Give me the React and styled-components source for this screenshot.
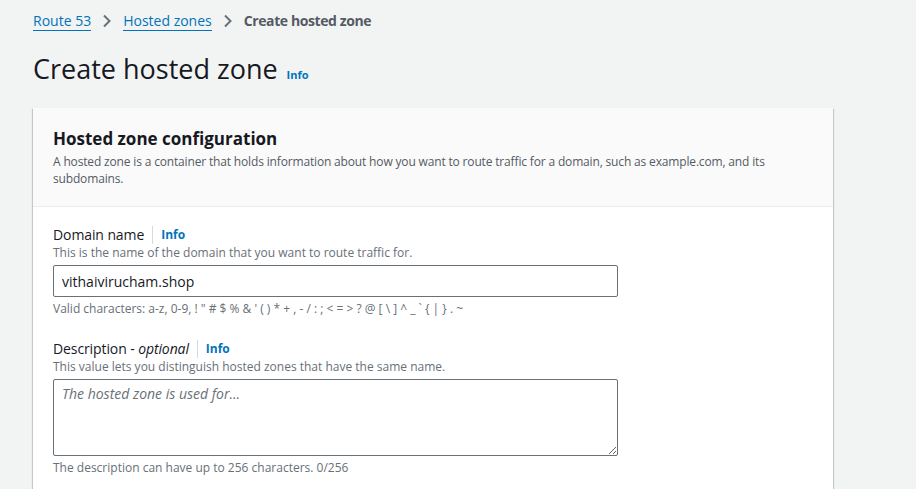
import React from "react";
import styled, { createGlobalStyle } from "styled-components";

const GlobalStyle = createGlobalStyle`
  html, body {
    margin: 0;
    padding: 0;
    background: #f2f3f3;
    font-family: "Open Sans", "Noto Sans", sans-serif;
    color: #16191f;
  }
`;

const Page = styled.div`
  padding: 11px 83px 0 33px;
  width: 800px;
`;

const Breadcrumbs = styled.nav`
  display: flex;
  align-items: center;
  gap: 10px;
  font-size: 14px;
  line-height: 20px;
`;

const Crumb = styled.a`
  color: #0073bb;
  text-decoration: none;
  border-bottom: 1px solid #0073bb;
  line-height: 19px;
  cursor: pointer;
`;

const Current = styled.span`
  color: #545b64;
  font-weight: 700;
  letter-spacing: -0.4px;
`;

const Chevron = styled.svg`
  width: 12px;
  height: 14px;
  flex: none;
`;

const TitleRow = styled.div`
  display: flex;
  align-items: baseline;
  gap: 9px;
  margin-top: 21px;
  margin-bottom: 22px;
`;

const Title = styled.h1`
  margin: 0;
  font-size: 27px;
  line-height: 34px;
  font-weight: 400;
`;

const InfoLink = styled.a`
  color: #0073bb;
  font-weight: 700;
  font-size: ${props => (props.small ? "11px" : "12px")};
  cursor: pointer;
`;

const Card = styled.section`
  background: #ffffff;
  box-shadow: 0 1px 1px 0 rgba(0, 28, 36, 0.3), 1px 1px 1px 0 rgba(0, 28, 36, 0.15),
    -1px 1px 1px 0 rgba(0, 28, 36, 0.15);
`;

const CardHeader = styled.header`
  background: #fafafa;
  border-bottom: 1px solid #eaeded;
  padding: 19px 20px 19px 20px;
`;

const CardTitle = styled.h2`
  margin: 0;
  font-size: 17px;
  line-height: 24px;
  font-weight: 700;
`;

const CardDesc = styled.p`
  margin: 2px 0 0;
  font-size: 12px;
  line-height: 17px;
  letter-spacing: -0.16px;
  color: #545b64;
  max-width: 740px;
`;

const CardBody = styled.div`
  padding: 18px 20px 20px;
  display: flex;
  flex-direction: column;
  gap: 22px;
`;

const Field = styled.div`
  display: flex;
  flex-direction: column;
`;

const LabelRow = styled.div`
  display: flex;
  align-items: center;
  font-size: 14px;
  line-height: 20px;
`;

const Label = styled.label`
  padding-right: 8px;
  margin-right: 8px;
  border-right: 1px solid #d5dbdb;
  line-height: 18px;
  letter-spacing: -0.1px;
`;

const Hint = styled.div`
  font-size: 12px;
  line-height: 16px;
  color: #687078;
  margin-bottom: ${props => props.gap || "0"};
  margin-top: ${props => props.top || "0"};
`;

const TextInput = styled.input`
  box-sizing: border-box;
  width: 565px;
  height: 32px;
  padding: 4px 8px;
  border: 1px solid #687078;
  border-radius: 2px;
  font-family: inherit;
  font-size: 14px;
  color: #16191f;
  background: #fff;
`;

const TextArea = styled.textarea`
  box-sizing: border-box;
  width: 565px;
  height: 77px;
  padding: 4px 8px;
  border: 1px solid #687078;
  border-radius: 2px;
  font-family: inherit;
  font-size: 14px;
  color: #16191f;
  background: #fff;
  resize: vertical;
  &::placeholder {
    font-style: italic;
    color: #687078;
  }
`;

function ChevronIcon() {
  return (
    <Chevron viewBox="0 0 12 14" fill="none">
      <path d="M3 1.5l5.5 5.5L3 12.5" stroke="#687078" strokeWidth="2" />
    </Chevron>
  );
}

export default function App() {
  return (
    <>
      <GlobalStyle />
      <Page>
        <Breadcrumbs>
          <Crumb>Route 53</Crumb>
          <ChevronIcon />
          <Crumb>Hosted zones</Crumb>
          <ChevronIcon />
          <Current>Create hosted zone</Current>
        </Breadcrumbs>
        <TitleRow>
          <Title>Create hosted zone</Title>
          <InfoLink small>Info</InfoLink>
        </TitleRow>
        <Card>
          <CardHeader>
            <CardTitle>Hosted zone configuration</CardTitle>
            <CardDesc>
              A hosted zone is a container that holds information about how you want to route
              traffic for a domain, such as example.com, and its subdomains.
            </CardDesc>
          </CardHeader>
          <CardBody>
            <Field>
              <LabelRow>
                <Label>Domain name</Label>
                <InfoLink>Info</InfoLink>
              </LabelRow>
              <Hint gap="4px">This is the name of the domain that you want to route traffic for.</Hint>
              <TextInput defaultValue="vithaivirucham.shop" />
              <Hint top="4px">
                Valid characters: a-z, 0-9, ! " # $ % &amp; ' ( ) * + , - / : ; &lt; = &gt; ? @ [ \ ] ^ _ ` {"{"} | {"}"} . ~
              </Hint>
            </Field>
            <Field>
              <LabelRow>
                <Label>
                  Description - <i>optional</i>
                </Label>
                <InfoLink>Info</InfoLink>
              </LabelRow>
              <Hint gap="4px">This value lets you distinguish hosted zones that have the same name.</Hint>
              <TextArea placeholder="The hosted zone is used for..." />
              <Hint top="4px">The description can have up to 256 characters. 0/256</Hint>
            </Field>
          </CardBody>
        </Card>
      </Page>
    </>
  );
}
